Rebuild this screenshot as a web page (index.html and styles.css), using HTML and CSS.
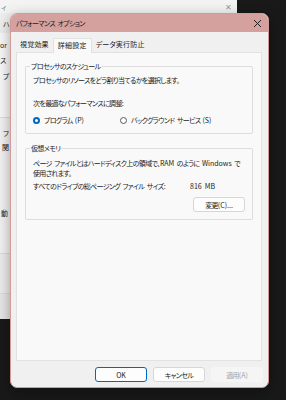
FILE: index.html
```html
<!DOCTYPE html>
<html lang="ja">
<head>
    <meta charset="UTF-8">
    <meta name="viewport" content="width=device-width, initial-scale=1.0">
    <title>パフォーマンス オプション</title>
    <link rel="stylesheet" href="styles.css">
</head>
<body>
    <div class="desktop">
        <!-- 後ろのウィンドウ (システムのプロパティ) -->
        <div class="back-window">
            <div class="back-top">
                <span class="back-title">ィ</span>
                <span class="back-close">✕</span>
            </div>
            <div class="back-tabs"><span class="back-side">ハ</span></div>
            <div class="back-panel">
                <div class="back-side back-l1"><span class="en">or</span></div>
                <div class="back-side back-l2">ス</div>
                <div class="back-side back-l3">プ</div>
            </div>
            <div class="back-panel back-panel-2">
                <div class="back-side back-l4">フ</div>
                <div class="back-side back-l5">関</div>
                <div class="back-side back-l6">動</div>
            </div>
            <div class="back-panel back-panel-3"></div>
            <div class="back-footer"></div>
        </div>

        <!-- パフォーマンス オプション ダイアログ -->
        <div class="dialog">
            <div class="titlebar">
                <span class="title">パフォーマンス オプション</span>
                <svg class="close" width="9" height="9" viewBox="0 0 9 9">
                    <path d="M1 1 L8 8 M8 1 L1 8" stroke="#1e1e1e" stroke-width="1" fill="none"/>
                </svg>
            </div>

            <div class="tabs">
                <div class="tab">視覚効果</div>
                <div class="tab active">詳細設定</div>
                <div class="tab">データ実行防止</div>
            </div>

            <div class="panel">
                <fieldset class="group">
                    <legend>プロセッサのスケジュール</legend>
                    <p class="line">プロセッサのリソースをどう割り当てるかを選択します。</p>
                    <p class="line adjust">次を最適なパフォーマンスに調整:</p>
                    <div class="radios">
                        <label class="radio radio-program"><span class="dot checked"></span>プログラム<span class="en">(P)</span></label>
                        <label class="radio"><span class="dot"></span>バックグラウンド サービス<span class="en">(S)</span></label>
                    </div>
                </fieldset>

                <fieldset class="group group-memory">
                    <legend>仮想メモリ</legend>
                    <p class="line desc">ページ ファイルとはハードディスク上の領域で、<span class="en">RAM</span> のように <span class="en">Windows</span> で<br>使用されます。</p>
                    <div class="size-row">
                        <span class="size-label">すべてのドライブの総ページング ファイル サイズ:</span>
                        <span class="en">816 MB</span>
                    </div>
                    <div class="change-row">
                        <button class="btn">変更<span class="en">(C)...</span></button>
                    </div>
                </fieldset>
            </div>

            <div class="footer">
                <button class="btn btn-default"><span class="en">OK</span></button>
                <button class="btn">キャンセル</button>
                <button class="btn btn-disabled">適用<span class="en">(A)</span></button>
            </div>
        </div>
    </div>
</body>
</html>
```
FILE: styles.css
```css
:root {
    --accent: #0067c0;
    --title-pink: #d5a19e;
    --text: #1b1b1b;
    --desk: #191919;
}

body {
    margin: 0;
    padding: 0;
    background-color: var(--desk);
    font-family: "Noto Sans CJK JP", "Noto Sans", sans-serif;
    font-feature-settings: "palt" 1;
    font-size: 7px;
    letter-spacing: -0.65px;
    word-spacing: 1.5px;
    color: var(--text);
}

/* 英数字は詰めない */
.en {
    letter-spacing: 0;
}

.desktop {
    position: relative;
    width: 286px;
    height: 400px;
    overflow: hidden;
}

/* 後ろのウィンドウ */
.back-window {
    width: 237px;
    height: 319px;
    background-color: #eeeeee;
    display: flex;
    flex-direction: column;
}

.back-top {
    height: 13px;
    display: flex;
    align-items: center;
    justify-content: space-between;
    padding: 0 6px 0 1px;
    background-color: #f3f3f3;
    color: #777;
}

.back-close {
    font-size: 8px;
    color: #9a9a9a;
}

/* 見えているのはダイアログの左の細い帯だけ */
.back-side {
    display: block;
    white-space: nowrap;
    line-height: 10px;
}

.back-tabs {
    height: 20px;
    padding: 6px 0 0 3px;
    box-sizing: border-box;
}

.back-panel {
    height: 84px;
    background-color: #f8f8f8;
    border-bottom: 1px solid #dcdcdc;
}

.back-l1 { padding-top: 7px; }
.back-l2 { margin-top: 5px; }
.back-l3 { margin-top: 6px; padding-left: 3px; }

.back-panel-2 {
    height: 135px;
    background-color: #f2f2f2;
}

.back-l4 { padding-top: 10px; padding-left: 3px; }
.back-l5 { margin-top: 4px; padding-left: 2px; }
.back-l6 { margin-top: 56px; padding-left: 1px; }

.back-panel-3 {
    height: 39px;
    background-color: #ececec;
}

.back-footer {
    flex: 1;
    background-color: #e6e6e6;
}

/* ダイアログ */
.dialog {
    position: absolute;
    left: 10px;
    top: 13px;
    width: 257px;
    height: 373px;
    border: 1px solid #d39c98;
    border-radius: 7px;
    background-color: #f0f0f0;
    box-shadow: 0 4px 14px rgba(0,0,0,0.35);
    display: flex;
    flex-direction: column;
    overflow: hidden;
}

.titlebar {
    height: 18px;
    background-color: var(--title-pink);
    display: flex;
    align-items: center;
    justify-content: space-between;
    padding: 0 6px 0 5px;
}

.close {
    display: block;
}

.tabs {
    display: flex;
    margin: 6px 0 0 5px;
    position: relative;
    z-index: 1;
}

.tab {
    height: 13px;
    line-height: 13px;
    padding: 0 4px;
    white-space: nowrap;
    letter-spacing: 0.2px;
}

.tab.active {
    background-color: #f9f9f9;
    border: 1px solid #e2e2e2;
    border-bottom: none;
    height: 14px;
    margin-bottom: -1px;
}

.panel {
    flex: 1;
    margin: 0 6px 0 5px;
    background-color: #f9f9f9;
    border: 1px solid #e2e2e2;
    padding: 8px 8px 0 8px;
}

.group {
    margin: 0;
    padding: 4px 7px 8px 7px;
    border: 1px solid #dddddd;
    border-radius: 2px;
}

.group legend {
    padding: 0 1px;
    margin-left: -3px;
    line-height: 10px;
}

.line {
    margin: 0;
    line-height: 10px;
    white-space: nowrap;
}

.adjust {
    margin-top: 13px;
}

.radios {
    display: flex;
    margin-top: 7px;
    line-height: 10px;
}

.radio {
    display: flex;
    align-items: center;
    gap: 2px;
}

.radio-program {
    width: 87px;
}

.radio .dot {
    box-sizing: border-box;
    width: 7px;
    height: 7px;
    border-radius: 50%;
    border: 1px solid #5a5a5a;
    background-color: #fdfdfd;
    margin-right: 2px;
}

.radio .dot.checked {
    border: 2px solid var(--accent);
    background-color: #ffffff;
}

.group-memory {
    margin-top: 9px;
    padding: 5px 7px 7px 7px;
}

.size-row {
    display: flex;
    margin-top: 3px;
    line-height: 10px;
    white-space: nowrap;
}

.size-label {
    width: 157px;
}

.change-row {
    display: flex;
    justify-content: flex-end;
    margin-top: 6px;
}

.btn {
    box-sizing: border-box;
    width: 52px;
    height: 15px;
    padding: 0;
    font-family: inherit;
    font-feature-settings: "palt" 1;
    font-size: 7px;
    letter-spacing: -0.65px;
    color: var(--text);
    background-color: #fdfdfd;
    border: 1px solid #d6d6d6;
    border-radius: 3px;
}

.btn-default {
    border: 1px solid var(--accent);
}

.btn-disabled {
    background-color: #f5f5f5;
    border-color: #f5f5f5;
    color: #a3a3a3;
}

.footer {
    display: flex;
    justify-content: flex-end;
    gap: 6px;
    padding: 6px 5px 5px 0;
}
```
